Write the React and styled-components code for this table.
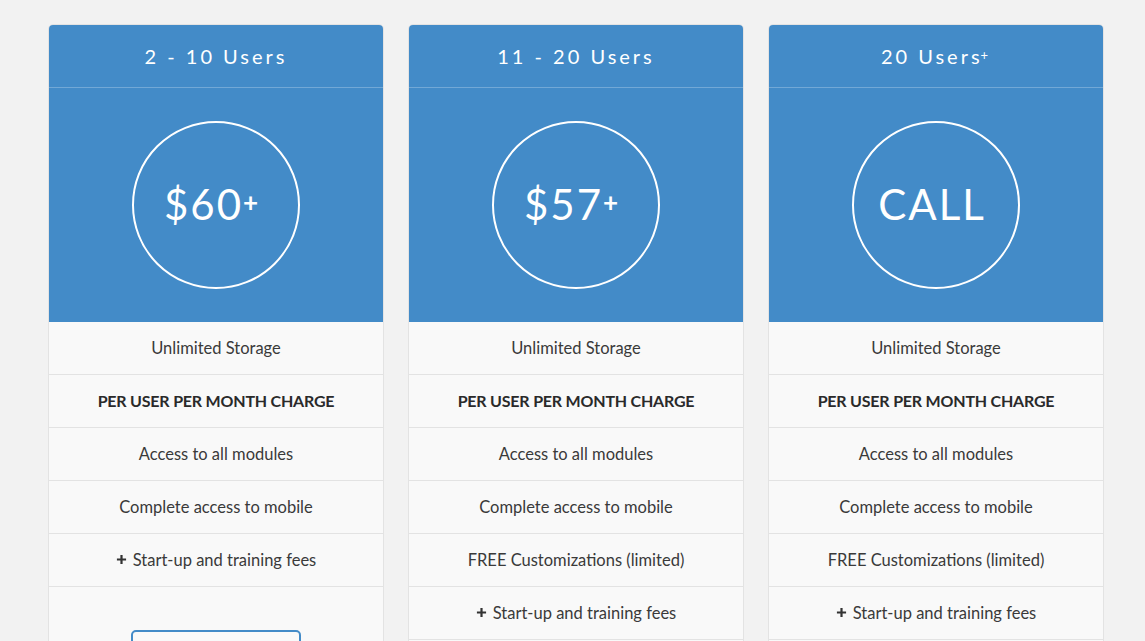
import styled, { createGlobalStyle } from "styled-components";

const plans = [
  {
    title: "2 - 10 Users",
    price: "$60",
    plus: true,
    rows: ["Unlimited Storage", "PER USER PER MONTH CHARGE", "Access to all modules", "Complete access to mobile", "+Start-up and training fees"],
  },
  {
    title: "11 - 20 Users",
    price: "$57",
    plus: true,
    rows: ["Unlimited Storage", "PER USER PER MONTH CHARGE", "Access to all modules", "Complete access to mobile", "FREE Customizations (limited)", "+Start-up and training fees"],
  },
  {
    title: "20 Users",
    titlePlus: true,
    price: "CALL",
    rows: ["Unlimited Storage", "PER USER PER MONTH CHARGE", "Access to all modules", "Complete access to mobile", "FREE Customizations (limited)", "+Start-up and training fees"],
  },
];

export default () => {
  return (
    <>
      <Global />
      <Grid>
        {plans.map((plan, index) => (
          <Card key={index}>
            <Header>
              {plan.title}
              {plan.titlePlus && <Sup>+</Sup>}
            </Header>
            <PriceArea>
              <Circle>
                <Price>
                  {plan.price}
                  {plan.plus && <PricePlus>+</PricePlus>}
                </Price>
              </Circle>
            </PriceArea>
            {plan.rows.map((row, i) => (
              <Row key={i} $bold={row.startsWith("PER")}>
                {row.startsWith("+") ? (
                  <>
                    <PlusIcon viewBox="0 0 12 12">
                      <path d="M6 1v10M1 6h10" stroke="#333" strokeWidth="2.4" />
                    </PlusIcon>
                    {row.slice(1)}
                  </>
                ) : (
                  row
                )}
              </Row>
            ))}
            <Footer>
              <Button aria-label="Sign up" />
            </Footer>
          </Card>
        ))}
      </Grid>
    </>
  );
};

const Global = createGlobalStyle`
  body {
    margin: 0;
    background: #f2f2f2;
    font-family: Lato, "Open Sans", sans-serif;
    color: #333;
  }
`;

const Grid = styled.div`
  display: grid;
  grid-template-columns: repeat(3, 336px);
  gap: 24px;
  padding: 24px 0 0 48px;
  align-items: start;
`;

const Card = styled.div`
  border: 1px solid #e3e3e3;
  border-radius: 5px 5px 0 0;
  overflow: hidden;
  background: #f9f9f9;
`;

const Header = styled.div`
  height: 63px;
  display: flex;
  align-items: center;
  justify-content: center;
  background: #438bc8;
  color: #fff;
  font-size: 20px;
  letter-spacing: 3px;
  box-sizing: border-box;
  border-bottom: 1px solid rgba(255, 255, 255, 0.25);
`;

const Sup = styled.span`
  font-size: 13px;
  margin-left: -2px;
  position: relative;
  top: -1px;
`;

const PriceArea = styled.div`
  height: 234px;
  background: #438bc8;
  display: flex;
  align-items: center;
  justify-content: center;
`;

const Circle = styled.div`
  width: 164px;
  height: 164px;
  border: 2px solid #fff;
  border-radius: 50%;
  display: flex;
  align-items: center;
  justify-content: center;
`;

const Price = styled.div`
  color: #fff;
  font-size: 42px;
  letter-spacing: 2px;
  font-weight: 400;
  margin-left: -8px;
  margin-top: -3px;
`;

const PricePlus = styled.span`
  font-size: 26px;
  font-weight: 700;
  position: relative;
  top: -8px;
`;

const Row = styled.div`
  height: 53px;
  display: flex;
  align-items: center;
  justify-content: center;
  border-bottom: 1px solid #e3e3e3;
  font-size: ${({ $bold }) => ($bold ? "16px" : "16.5px")};
  font-weight: ${({ $bold }) => ($bold ? 700 : 400)};
  color: ${({ $bold }) => ($bold ? "#2a2a2a" : "#3a3a3a")};
  letter-spacing: ${({ $bold }) => ($bold ? "-0.2px" : "0")};
  padding-bottom: 1px;
  box-sizing: border-box;
`;

const PlusIcon = styled.svg`
  width: 11px;
  height: 11px;
  margin-right: 6px;
`;

const Footer = styled.div`
  padding: 43px 0 30px;
  display: flex;
  justify-content: center;
`;

const Button = styled.button`
  width: 170px;
  height: 44px;
  border: 2px solid #438bc8;
  border-radius: 5px;
  background: transparent;
  color: #438bc8;
  font-family: inherit;
  font-size: 16px;
`;
